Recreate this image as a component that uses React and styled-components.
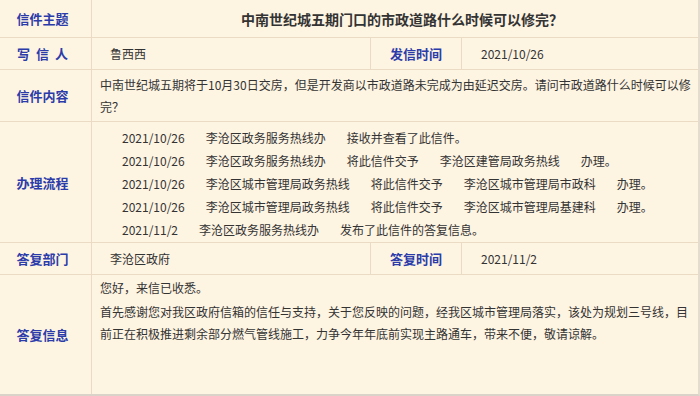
import React from 'react';
import styled, { createGlobalStyle } from 'styled-components';

const GlobalStyle = createGlobalStyle`
    html, body {
        margin: 0;
        padding: 0;
        background: #fef4e2;
    }
    body {
        font-family: "Noto Sans CJK SC", "Noto Sans", sans-serif;
        color: #333333;
    }
`;

const StyledTable = styled.div`
    width: 700px;
    height: 396px;
    box-sizing: border-box;
    background: #fef4e2;
    border-right: 2px solid #e4dccf;
    border-bottom: 2px solid #d9d3ca;
    display: flex;
    flex-direction: column;
    overflow: hidden;
`;

const StyledRow = styled.div`
    display: grid;
    grid-template-columns: ${props => props.split ? '92px 279px 91px 1fr' : '92px 1fr'};
    height: ${props => props.height ? `${props.height}px` : 'auto'};
    flex: ${props => props.height ? 'none' : '1'};
    box-sizing: border-box;
    border-bottom: ${props => props.last ? 'none' : '1px solid #ebdbc4'};
`;

const StyledLabel = styled.div`
    display: flex;
    align-items: center;
    justify-content: center;
    padding-right: 6px;
    border-right: 1px solid #ebdbc4;
    font-size: 13px;
    font-weight: 700;
    color: #2b3caa;
    letter-spacing: ${props => props.spaced ? '6px' : '0'};
    & > span {
        margin-right: ${props => props.spaced ? '-6px' : '0'};
    }
`;

const StyledMidLabel = styled(StyledLabel)`
    padding-right: 0;
`;

const StyledValue = styled.div`
    display: flex;
    align-items: center;
    padding-left: ${props => props.indent || 18}px;
    font-size: 12px;
    border-right: ${props => props.divider ? '1px solid #ebdbc4' : 'none'};
`;

const StyledTitle = styled.div`
    display: flex;
    align-items: center;
    justify-content: center;
    padding-left: 14px;
    font-size: 14px;
    font-weight: 700;
    color: #333333;
`;

const StyledText = styled.div`
    display: flex;
    flex-direction: column;
    justify-content: ${props => props.top ? 'flex-start' : 'center'};
    padding: ${props => props.top ? '2px 6px 0 8px' : '0 6px 0 8px'};
    font-size: 12px;
    line-height: 22px;
    & > p {
        margin: 0;
    }
    & > p + p {
        margin-top: 2px;
    }
`;

const StyledProcess = styled.div`
    display: flex;
    flex-direction: column;
    padding: 4px 0 0 30px;
    font-size: 12px;
    line-height: 23px;
`;

const StyledStep = styled.div`
    display: flex;
    gap: 21px;
    white-space: nowrap;
`;

const steps = [
    ['2021/10/26', '李沧区政务服务热线办', '接收并查看了此信件。'],
    ['2021/10/26', '李沧区政务服务热线办', '将此信件交予', '李沧区建管局政务热线', '办理。'],
    ['2021/10/26', '李沧区城市管理局政务热线', '将此信件交予', '李沧区城市管理局市政科', '办理。'],
    ['2021/10/26', '李沧区城市管理局政务热线', '将此信件交予', '李沧区城市管理局基建科', '办理。'],
    ['2021/11/2', '李沧区政务服务热线办', '发布了此信件的答复信息。'],
];

const App = () => {
    return (
        <>
            <GlobalStyle />
            <StyledTable>
                <StyledRow height={38}>
                    <StyledLabel><span>信件主题</span></StyledLabel>
                    <StyledTitle>中南世纪城五期门口的市政道路什么时候可以修完？</StyledTitle>
                </StyledRow>
                <StyledRow split height={32}>
                    <StyledLabel spaced><span>写信人</span></StyledLabel>
                    <StyledValue divider>鲁西西</StyledValue>
                    <StyledMidLabel>发信时间</StyledMidLabel>
                    <StyledValue indent={19}>2021/10/26</StyledValue>
                </StyledRow>
                <StyledRow height={52}>
                    <StyledLabel><span>信件内容</span></StyledLabel>
                    <StyledText>
                        <p>中南世纪城五期将于10月30日交房，但是开发商以市政道路未完成为由延迟交房。请问市政道路什么时候可以修完？</p>
                    </StyledText>
                </StyledRow>
                <StyledRow height={121}>
                    <StyledLabel><span>办理流程</span></StyledLabel>
                    <StyledProcess>
                        {steps.map((step, i) => (
                            <StyledStep key={i}>
                                {step.map((part, j) => <span key={j}>{part}</span>)}
                            </StyledStep>
                        ))}
                    </StyledProcess>
                </StyledRow>
                <StyledRow split height={32}>
                    <StyledLabel><span>答复部门</span></StyledLabel>
                    <StyledValue divider>李沧区政府</StyledValue>
                    <StyledMidLabel>答复时间</StyledMidLabel>
                    <StyledValue indent={19}>2021/11/2</StyledValue>
                </StyledRow>
                <StyledRow last>
                    <StyledLabel><span>答复信息</span></StyledLabel>
                    <StyledText top>
                        <p>您好，来信已收悉。</p>
                        <p>首先感谢您对我区政府信箱的信任与支持，关于您反映的问题，经我区城市管理局落实，该处为规划三号线，目前正在积极推进剩余部分燃气管线施工，力争今年年底前实现主路通车，带来不便，敬请谅解。</p>
                    </StyledText>
                </StyledRow>
            </StyledTable>
        </>
    );
};

export default App;
